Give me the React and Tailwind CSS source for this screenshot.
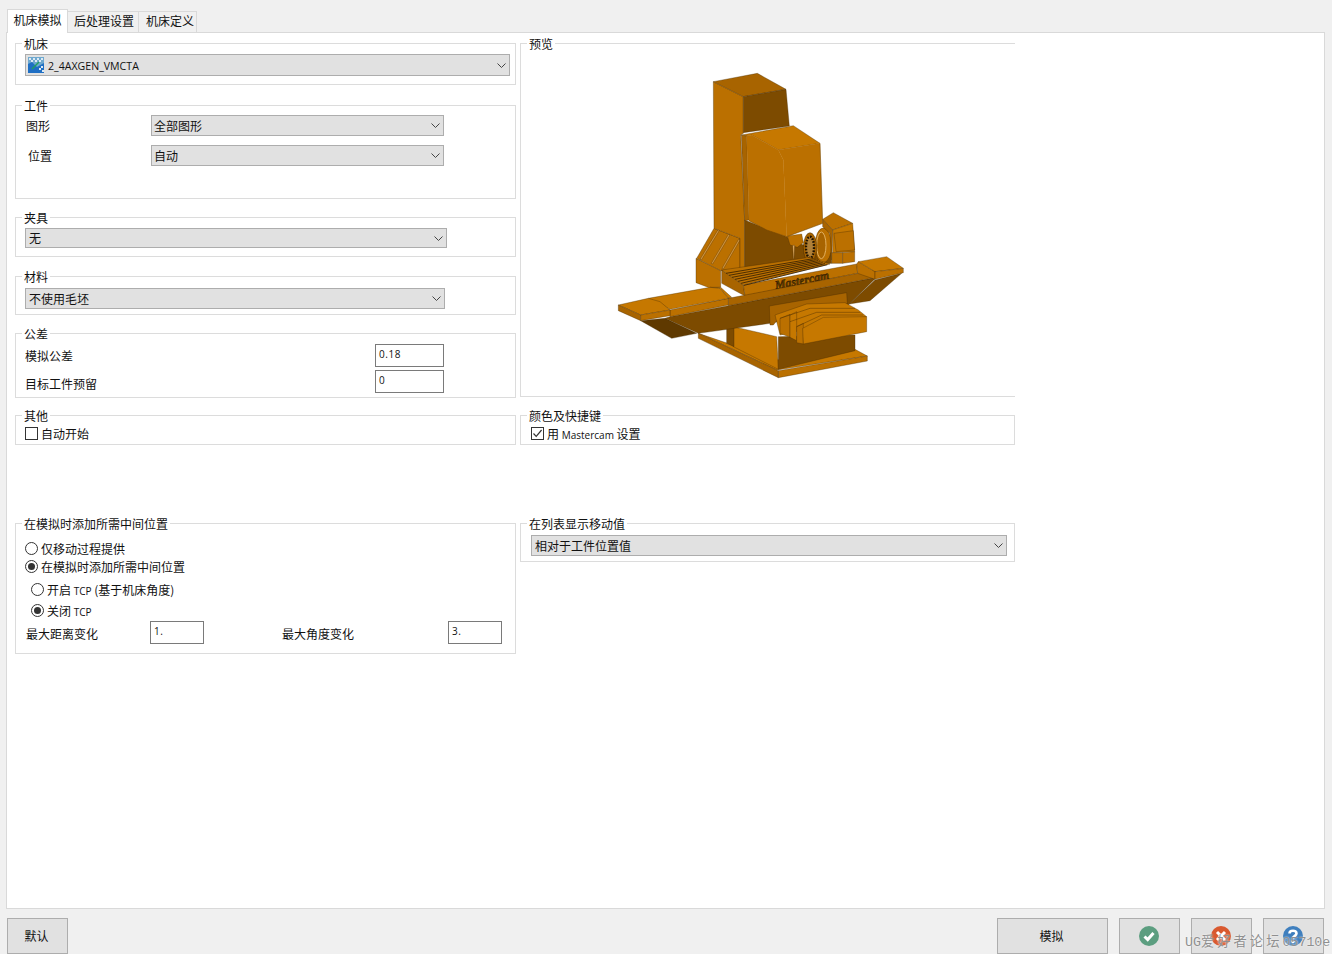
import React from "react";

const L = "#c67800", M = "#bb7000", S = "#a86400", D = "#7d4b00", K = "#5f3900";

function P({ d, f, n }) {
  return <polygon points={d} fill={f} stroke={n ? f : "#3f2600"} strokeWidth="1" strokeLinejoin="round" />;
}

function Machine() {
  const slots = [0, 1, 2, 3, 4, 5, 6];
  return (
    <svg width="320" height="330" viewBox="0 0 960 990" className="block">
      {/* base */}
      <P f={L} d="295,820 530,930 802,888 765,868 530,900" />
      <P f={M} d="535,932 802,888 802,903 535,953" />
      <P f={S} d="295,820 535,932 535,953 295,835" />
      <P f={L} d="400,800 530,830 535,928 400,860" />
      <P f={D} d="535,830 765,825 765,872 535,928" />
      <P f={D} d="380,800 402,800 402,860 380,850" />
      <P f={K} d="122,782 195,775 290,820 215,835" />
      <P f={D} d="195,775 295,820 510,790 745,735 830,652 385,737 210,770" />
      {/* right wing under */}
      <P f={D} d="825,660 905,640 810,722 748,732" />
      {/* column */}
      <P f={M} d="288,595 362,632 362,682 330,684 288,668" />
      <P f={M} d="290,595 342,505 420,535 420,625 362,632" />
      <P f="#d89a40" d="300,598 356,506 360,508 304,600" />
      <P f="#d89a40" d="334,610 386,522 390,524 338,612" />
      <P f="#d89a40" d="366,625 416,538 420,540 370,627" />
      <P f={M} d="340,65 430,110 430,220 422,225 434,480 434,625 420,625 420,535 342,505" />
      <P f={S} d="340,65 472,40 558,88 430,110" />
      <P f={D} d="430,110 558,88 568,198 430,218" />
      {/* dark recess */}
      <P f={D} d="434,480 560,530 610,555 690,530 695,610 434,630" />
      {/* rotary */}
      <ellipse cx="670" cy="556" rx="25" ry="52" fill={M} stroke="#3f2600" strokeWidth="1.2" />
      <ellipse cx="664" cy="556" rx="14" ry="40" fill="#a86400" stroke="#e2b060" strokeWidth="3" />
      <ellipse cx="630" cy="562" rx="20" ry="44" fill={S} stroke="#2d1b00" strokeWidth="1.2" />
      <ellipse cx="630" cy="562" rx="12" ry="32" fill="#b08038" stroke="#1d1100" strokeWidth="7" strokeDasharray="5 4" />
      {/* box */}
      <P f={M} d="668,478 700,458 758,490 698,510" />
      <P f={S} d="668,478 698,510 695,600 690,520 668,500" />
      <P f={L} d="698,510 758,490 764,575 698,578" />
      <P f={M} d="702,520 760,512 764,570 708,575" />
      <P f={M} d="695,578 728,578 728,610 695,610" />
      <P f={M} d="728,578 764,575 764,605 728,610" />
      {/* head */}
      <P f={M} d="562,528 605,522 610,548 592,562 570,555" />
      <P f="#e8b060" d="578,556 584,556 582,596 580,596" />
      <P f={L} d="425,225 580,197 660,250 535,270 455,225 440,228" />
      <P f={S} d="424,225 440,228 447,480 434,482" />
      <P f={M} n d="440,228 455,225 535,270 550,300 560,530 500,510 447,482" />
      <P f={M} n d="535,270 660,250 668,490 560,530 550,300" />
      <polyline points="447,482 500,510 560,530 668,490 660,250" fill="none" stroke="#3f2600" strokeWidth="1" />
      {/* table */}
      <P f={S} d="365,630 430,675 435,708 365,670" />
      <P f={M} d="430,675 770,612 773,640 435,708" />
      <P f={M} d="365,630 630,592 690,612 430,675" />
      {slots.map((i) => (
        <line key={i} x1={378 + i * 9} y1={640 + i * 6} x2={640 + i * 7} y2={596 + i * 3} stroke="#3b2300" strokeWidth="2.6" />
      ))}
      <text x="527" y="688" transform="rotate(-11 527 688)" textLength="165" fontFamily="'Liberation Serif', serif" fontStyle="italic" fontWeight="700" fontSize="36" fill="#5f3900" stroke="#2a1800" strokeWidth="1.2">Mastercam</text>
      {/* crossbar */}
      <P f={L} d="330,682 362,682 395,712 385,715 360,685" />
      <P f={S} d="385,715 825,630 830,652 385,737" />
      <P f={M} d="210,750 385,715 385,735 210,770" />
      <P f={L} d="145,715 330,682 360,685 385,715 210,748" />
      <P f={L} d="55,735 145,715 180,725 210,750 122,765" />
      <P f={S} d="55,735 122,765 122,782 55,752" />
      <P f={M} d="122,765 210,750 210,767 122,782" />
      <P f={M} d="770,612 775,605 825,635 825,658 773,640" />
      <P f={L} d="775,605 860,590 910,625 825,635" />
      <P f={M} d="825,635 910,625 910,638 825,658" />
      {/* guard */}
      <P f={S} d="508,738 740,698 742,732 650,745 540,770 520,795 510,795" />
      <P f={L} d="525,765 620,732 735,728 775,750 800,770 540,825" />
      <P f={M} d="540,775 570,763 570,832 540,820" />
      <P f={L} d="570,765 590,755 590,842 570,832" />
      <P f={M} d="590,800 610,790 610,852 590,848" />
      <polyline points="540,775 630,745 765,745" fill="none" stroke="#3f2600" strokeWidth="1.2" />
      <polyline points="570,785 650,757 780,757" fill="none" stroke="#3f2600" strokeWidth="1.2" />
      <polyline points="590,800 665,765 790,765" fill="none" stroke="#3f2600" strokeWidth="1.2" />
      <P f={L} d="608,805 670,772 800,770 800,815 610,852" />
    </svg>
  );
}

function Group({ title, className, children }) {
  return (
    <div className={`border border-[#dcdcdc] ${className}`}>
      <div className="-mt-[9px] ml-[6px] h-[16px] w-fit bg-white px-[2px] leading-[18px]">{title}</div>
      {children}
    </div>
  );
}

function Chevron() {
  return (
    <svg width="9" height="5" viewBox="0 0 9 5" fill="none" stroke="#444" strokeWidth="1" className="shrink-0">
      <path d="M0.5 0.5 L4.5 4.5 L8.5 0.5" />
    </svg>
  );
}

function Combo({ className, children }) {
  return (
    <div className={`flex items-center justify-between border border-[#adadad] bg-[#e1e1e1] pr-[3px] ${className}`}>
      <div className="flex items-center leading-none">{children}</div>
      <Chevron />
    </div>
  );
}

function Input({ className, value }) {
  return (
    <div className={`border border-[#7a7a7a] bg-white pl-[3px] text-[10px] tracking-[0.6px] leading-[18px] font-['Open_Sans',sans-serif] ${className}`}>
      {value}
    </div>
  );
}

function Radio({ on, className, children }) {
  return (
    <div className={`flex items-center ${className}`}>
      <span className="flex h-[13px] w-[13px] shrink-0 items-center justify-center rounded-full border border-[#333] bg-white">
        {on && <span className="h-[7px] w-[7px] rounded-full bg-[#333]" />}
      </span>
      <span className="ml-[3px] leading-none">{children}</span>
    </div>
  );
}

function Check({ on, className, children }) {
  return (
    <div className={`flex items-center ${className}`}>
      <span className="flex h-[13px] w-[13px] shrink-0 items-center justify-center border border-[#333] bg-white">
        {on && (
          <svg width="11" height="11" viewBox="0 0 11 11" fill="none" stroke="#333" strokeWidth="1.2">
            <path d="M1.5 5.5 L4.2 8.4 L9.6 2" />
          </svg>
        )}
      </span>
      <span className="ml-[3px] leading-none">{children}</span>
    </div>
  );
}

function FootBtn({ className, children }) {
  return (
    <div className={`flex h-[36px] items-center justify-center border border-[#adadad] bg-[#e1e1e1] pr-[2px] ${className}`}>
      {children}
    </div>
  );
}

function Latin({ children }) {
  return <span className="font-['Open_Sans',sans-serif] text-[10px]">{children}</span>;
}

export default function App() {
  return (
    <div className="relative flex h-[954px] w-[1332px] flex-col overflow-hidden bg-[#f0f0f0] text-[12px] text-[#111] font-['Noto_Sans_CJK_SC','Noto_Sans',sans-serif]">
      {/* tabs */}
      <div className="z-10 -mb-px flex h-[33px] items-end pl-[7px]">
        <div className="flex h-[24px] w-[61px] items-center justify-center border border-b-0 border-[#d9d9d9] bg-white pb-[4px]">机床模拟</div>
        <div className="flex h-[22px] w-[71px] items-center justify-center border border-[#d9d9d9] border-l-0 bg-[#f0f0f0] pb-[2px] pl-[2px]">后处理设置</div>
        <div className="flex h-[22px] w-[58px] items-center justify-center border border-[#d9d9d9] border-l-0 bg-[#f0f0f0] pb-[2px] pl-[5px]">机床定义</div>
      </div>

      {/* panel */}
      <div className="ml-[6px] flex h-[877px] w-[1319px] border border-[#d9d9d9] bg-white pl-[8px] pt-[10px]">
        {/* left column */}
        <div className="flex w-[501px] flex-col">
          <Group title="机床" className="h-[42px]">
            <Combo className="ml-[9px] mt-[3px] h-[22px] w-[485px]">
              <svg width="16" height="16" viewBox="0 0 16 16" className="ml-[2px]">
                <rect width="16" height="16" fill="#1f6fc4" />
                <path d="M0 0h16v6L9 10 4 5 0 7z" fill="#6fa9cf" />
                <path d="M1 1h2v2H1zM5 1h2v2H5zM9 1h2v2H9zM13 1h2v2h-2zM3 3h2v2H3zM7 3h2v2H7zM11 3h2v2h-2zM13 9h2v2h-2zM11 11h2v2h-2zM14 13h2v2h-2z" fill="#dceaf5" />
                <path d="M4 12 L11 5" stroke="#20a060" strokeWidth="1.5" />
              </svg>
              <span className="ml-[4px] pt-[2px] font-['Open_Sans',sans-serif] text-[10.6px]">2_4AXGEN_VMCTA</span>
            </Combo>
          </Group>

          <Group title="工件" className="mt-[20px] h-[94px]">
            <div className="mt-[2px] flex items-center">
              <span className="ml-[10px] w-[125px] pt-[1px]">图形</span>
              <Combo className="h-[21px] w-[293px] pl-[2px]">全部图形</Combo>
            </div>
            <div className="mt-[9px] flex items-center">
              <span className="ml-[12px] w-[123px]">位置</span>
              <Combo className="h-[21px] w-[293px] pl-[2px]">自动</Combo>
            </div>
          </Group>

          <Group title="夹具" className="mt-[18px] h-[40px]">
            <Combo className="ml-[9px] mt-[3px] h-[20px] w-[422px] pl-[3px]">无</Combo>
          </Group>

          <Group title="材料" className="mt-[19px] h-[39px]">
            <Combo className="ml-[9px] mt-[4px] h-[21px] w-[420px] pl-[3px]">不使用毛坯</Combo>
          </Group>

          <Group title="公差" className="mt-[18px] h-[65px]">
            <div className="mt-[3px] flex items-center">
              <span className="ml-[9px] w-[350px] pt-[1px]">模拟公差</span>
              <Input className="h-[23px] w-[69px]" value="0.18" />
            </div>
            <div className="mt-[3px] flex items-center">
              <span className="ml-[9px] w-[350px] pt-[5px]">目标工件预留</span>
              <Input className="h-[23px] w-[69px]" value="0" />
            </div>
          </Group>

          <Group title="其他" className="mt-[17px] h-[30px]">
            <Check className="ml-[9px] mt-[4px]">自动开始</Check>
          </Group>

          <Group title="在模拟时添加所需中间位置" className="mt-[78px] h-[131px]">
            <Radio className="ml-[9px] mt-[11px]">仅移动过程提供</Radio>
            <Radio on className="ml-[9px] mt-[5px]">在模拟时添加所需中间位置</Radio>
            <Radio className="ml-[15px] mt-[10px]">开启 <Latin>TCP</Latin> (基于机床角度)</Radio>
            <Radio on className="ml-[15px] mt-[8px]">关闭 <Latin>TCP</Latin></Radio>
            <div className="mt-[4px] flex items-center">
              <span className="ml-[10px] w-[124px] pt-[3px]">最大距离变化</span>
              <Input className="h-[23px] w-[54px]" value="1." />
              <span className="ml-[78px] w-[166px] pt-[3px]">最大角度变化</span>
              <Input className="h-[23px] w-[54px]" value="3." />
            </div>
          </Group>
        </div>

        {/* right column */}
        <div className="ml-[4px] flex w-[495px] flex-col">
          <Group title="预览" className="h-[354px] border-r-0">
            <div className="ml-[79px] mt-[9px]">
              <Machine />
            </div>
          </Group>
          <Group title="颜色及快捷键" className="mt-[18px] h-[30px]">
            <Check on className="ml-[10px] mt-[4px]">用 <Latin>Mastercam</Latin> 设置</Check>
          </Group>
          <Group title="在列表显示移动值" className="mt-[78px] h-[39px]">
            <Combo className="ml-[10px] mt-[4px] h-[21px] w-[476px] pl-[3px]">相对于工件位置值</Combo>
          </Group>
        </div>
      </div>

      {/* footer */}
      <div className="mt-[9px] flex h-[36px] pl-[7px]">
        <FootBtn className="w-[61px]">默认</FootBtn>
        <FootBtn className="ml-[929px] w-[111px]">模拟</FootBtn>
        <FootBtn className="ml-[11px] w-[61px]">
          <svg width="20" height="20" viewBox="0 0 20 20">
            <circle cx="10" cy="10" r="10" fill="#5c9e80" />
            <path d="M5.5 10.5 L8.7 13.6 L14.5 7" fill="none" stroke="#fff" strokeWidth="3" />
          </svg>
        </FootBtn>
        <FootBtn className="ml-[11px] w-[61px]">
          <svg width="20" height="20" viewBox="0 0 20 20">
            <circle cx="10" cy="10" r="10" fill="#d9592f" />
            <path d="M6 6 L14 14 M14 6 L6 14" fill="none" stroke="#fff" strokeWidth="3" />
          </svg>
        </FootBtn>
        <FootBtn className="ml-[11px] w-[61px]">
          <svg width="20" height="20" viewBox="0 0 20 20">
            <circle cx="10" cy="10" r="10" fill="#3f7fbe" />
            <path d="M6.5 7.5 C6.5 3.8 13.5 3.8 13.5 7.5 C13.5 10 10 9.8 10 12.5" fill="none" stroke="#fff" strokeWidth="2.6" />
            <circle cx="10" cy="15.5" r="1.7" fill="#fff" />
          </svg>
        </FootBtn>
      </div>

      {/* watermark */}
      <div className="absolute bottom-[3px] left-[1185px] z-20 whitespace-nowrap font-['Liberation_Mono','Noto_Sans_CJK_SC',monospace] text-[13.3px] leading-[16px] text-[#8f8f8f] [text-shadow:0_0_2px_#ffffff]">
        UG<span className="tracking-[3px] font-['Noto_Sans_CJK_SC',serif]">爱好者论坛</span>05710e
      </div>
    </div>
  );
}
